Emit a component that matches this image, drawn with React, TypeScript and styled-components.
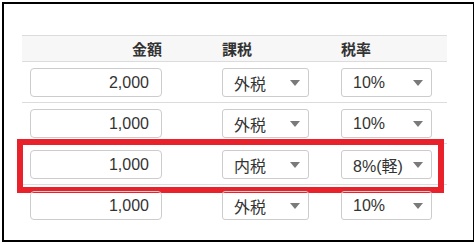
import styled, { createGlobalStyle } from "styled-components";

const GlobalStyle = createGlobalStyle`
  html, body {
    margin: 0;
    padding: 0;
    background: #ffffff;
  }
  body {
    font-family: "Liberation Sans", "Noto Sans CJK JP", sans-serif;
    color: #333333;
  }
`;

type Row = { amount: string; tax: string; rate: string; highlight?: boolean };

const rows: Row[] = [
  { amount: "2,000", tax: "外税", rate: "10%" },
  { amount: "1,000", tax: "外税", rate: "10%" },
  { amount: "1,000", tax: "内税", rate: "8%(軽)", highlight: true },
  { amount: "1,000", tax: "外税", rate: "10%" },
];

const Arrow = () => (
  <svg width="10" height="6" viewBox="0 0 10 6">
    <path d="M0 0 L10 0 L5 6 Z" fill="#7a7a7a" />
  </svg>
);

const App = () => {
  return (
    <>
      <GlobalStyle />
      <Frame>
        <Table>
          <HeaderRow>
            <HeadCell $align="right">
              <HeadLabel $width={132}>金額</HeadLabel>
            </HeadCell>
            <HeadCell>課税</HeadCell>
            <HeadCell>税率</HeadCell>
          </HeaderRow>
          {rows.map((r, i) => (
            <BodyRow key={i} $last={i === rows.length - 1}>
              <Cell>
                <AmountInput>{r.amount}</AmountInput>
              </Cell>
              <Cell>
                <Select $width={87}>
                  <span>{r.tax}</span>
                  <Arrow />
                </Select>
              </Cell>
              <Cell>
                <Select $width={91}>
                  <span>{r.rate}</span>
                  <Arrow />
                </Select>
              </Cell>
              {r.highlight && <Highlight />}
            </BodyRow>
          ))}
        </Table>
      </Frame>
    </>
  );
};

export default App;

const Frame = styled.div`
  margin: 2px;
  width: 465px;
  height: 236px;
  border: 2px solid #000000;
  padding: 31px 0 0 18px;
  box-sizing: content-box;
  width: 451px;
  height: 205px;
  overflow: hidden;
`;

const Table = styled.div`
  width: 425px;
`;

const HeaderRow = styled.div`
  display: grid;
  grid-template-columns: 192px 119px 114px;
  height: 25px;
  align-items: center;
  background: #f7f7f7;
  border-top: 1px solid #dcdcdc;
  border-bottom: 1px solid #dcdcdc;
`;

const HeadCell = styled.div<{ $align?: "left" | "right" }>`
  padding-left: 8px;
  font-size: 15px;
  font-weight: bold;
  color: #333333;
  text-align: ${(p) => p.$align ?? "left"};
`;

const HeadLabel = styled.div<{ $width: number }>`
  width: ${(p) => p.$width}px;
  text-align: right;
`;

const BodyRow = styled.div<{ $last?: boolean }>`
  position: relative;
  display: grid;
  grid-template-columns: 192px 119px 114px;
  align-items: center;
  padding: 6px 0 5px;
  border-bottom: ${(p) => (p.$last ? "none" : "1px solid #dcdcdc")};
`;

const Cell = styled.div`
  padding-left: 8px;
`;

const AmountInput = styled.div`
  width: 132px;
  height: 29px;
  box-sizing: border-box;
  border: 1px solid #cccccc;
  border-radius: 4px;
  padding-right: 12px;
  display: flex;
  align-items: center;
  justify-content: flex-end;
  font-size: 16px;
  color: #333333;
`;

const Select = styled.div<{ $width: number }>`
  width: ${(p) => p.$width}px;
  height: 29px;
  box-sizing: border-box;
  border: 1px solid #cccccc;
  border-radius: 3px;
  padding: 0 8px 0 11px;
  display: flex;
  align-items: center;
  justify-content: space-between;
  font-size: 16px;
  color: #333333;
`;

const Highlight = styled.div`
  position: absolute;
  left: -5px;
  top: -5px;
  width: 427px;
  height: 54px;
  box-sizing: border-box;
  border: 6px solid #e8212b;
  pointer-events: none;
`;
